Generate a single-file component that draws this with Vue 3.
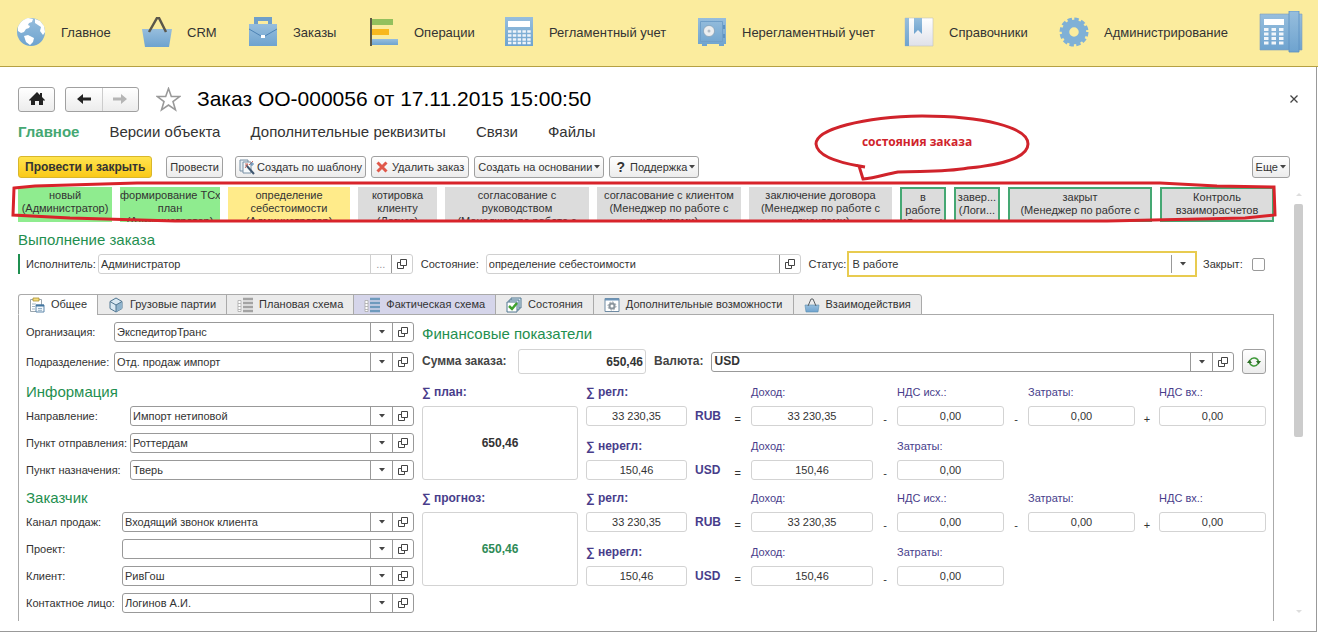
<template>
  <div class="app">
    <!-- Icon sprite -->
    <svg class="sprite" width="0" height="0" aria-hidden="true">
      <defs>
        <linearGradient id="blue" x1="0" y1="0" x2="0" y2="1">
          <stop offset="0" stop-color="#97bedd" />
          <stop offset="1" stop-color="#6ea3cf" />
        </linearGradient>
        <linearGradient id="paper" x1="0" y1="0" x2="0" y2="1">
          <stop offset="0" stop-color="#ffffff" />
          <stop offset="1" stop-color="#dfe1ea" />
        </linearGradient>
      </defs>
      <symbol id="globe" viewBox="0 0 30 30">
        <circle cx="15" cy="15" r="14" fill="url(#blue)" />
        <path d="M2 10C4 5 8 2 12 1l5 1-1 3-3 1-1 2 2 1-1 2-3 1-2 3-3 1-3-2zM19 2l5 2 4 5 1 6-2 3-3-4 1-4-3-2-3-2zM8 19l4-1 6 3-1 4-3 3-4-3z" fill="#fff" />
      </symbol>
      <symbol id="basket" viewBox="0 0 30 30">
        <path d="M0 12h30l-3 18H3z" fill="url(#blue)" />
        <path d="M7 15l8-14h2l7 14" fill="none" stroke="#5b574b" stroke-width="2.5" />
      </symbol>
      <symbol id="case" viewBox="0 0 30 30">
        <path d="M8 8V2h14v6" fill="none" stroke="#6f9fc9" stroke-width="4" />
        <path d="M1 7h28v22H1z" fill="url(#blue)" />
        <path d="M1 12l12 7h4l12-7" fill="none" stroke="#4d83b4" stroke-width="1" />
        <path d="M13 18h4v3h-4z" fill="#fff" />
      </symbol>
      <symbol id="bars" viewBox="0 0 30 30">
        <path d="M2 1v28" stroke="#5f5a45" stroke-width="2" />
        <path d="M3 2h21v6H3z" fill="#93c05d" />
        <path d="M3 12h17v6H3z" fill="#f8b81e" />
        <path d="M3 22h26v6H3z" fill="url(#blue)" />
      </symbol>
      <symbol id="calc" viewBox="0 0 30 30">
        <path d="M1 0h28v29H1z" fill="url(#blue)" />
        <path d="M4 4h22v6H4z" fill="#fff" />
        <path d="M4 14.500h23M4 18.500h23M4 22.500h23M4 26h23" stroke="#eef4fa" stroke-width="2.500" stroke-dasharray="3.500 1.300" />
      </symbol>
      <symbol id="safe" viewBox="0 0 30 30">
        <path d="M1 1h28v26h-2v2h-5v-2H10v2H5v-2H1z" fill="url(#blue)" />
        <path d="M3.500 4.500h22v20h-22z" fill="none" stroke="#6f9fc9" />
        <path d="M27 8v4M27 17v4" stroke="#5f93c1" stroke-width="2" />
        <circle cx="12" cy="14" r="5.500" fill="#eceef0" stroke="#7b93a8" stroke-width=".6" />
        <circle cx="12" cy="14" r="1.500" fill="#b3bcc5" />
      </symbol>
      <symbol id="book" viewBox="0 0 30 30">
        <path d="M1 1h28v28H1z" fill="url(#paper)" stroke="#c5c4b8" stroke-width=".6" />
        <path d="M1 1h4v28H1z" fill="url(#blue)" />
        <path d="M10 1h8v16l-4-4-4 4z" fill="url(#blue)" />
      </symbol>
      <symbol id="gear" viewBox="0 0 30 30">
        <circle cx="15" cy="15" r="8.500" fill="none" stroke="#7fb0d6" stroke-width="7.500" />
        <circle cx="15" cy="15" r="13" fill="none" stroke="#7fb0d6" stroke-width="3" stroke-dasharray="4.400 2.400" />
      </symbol>
      <symbol id="phone" viewBox="0 0 44 42">
        <path d="M1 3h42v36H1z" fill="url(#blue)" stroke="#7f9fb9" stroke-width=".6" />
        <path d="M5 8h20v6H5z" fill="#fff" />
        <path d="M5 18.500h20M5 23h20M5 27.500h20M5 32h20" stroke="#f2f6fa" stroke-width="3" stroke-dasharray="4.500 3" />
        <path d="M30 0h10v41H30z" fill="url(#blue)" stroke="#5b8fc0" stroke-width=".8" />
      </symbol>
      <symbol id="home" viewBox="0 0 16 14">
        <path d="M8 0l3 3V1h2v4l3 3-1 1-1-1v5h-4V9H6v4H2V8L1 9 0 8z" fill="#222" />
      </symbol>
      <symbol id="arrow" viewBox="0 0 16 12">
        <path d="M1 6l6-5v3.500h8v3H7V11z" fill="currentColor" />
      </symbol>
      <symbol id="star" viewBox="0 0 24 24">
        <path d="M12 1.500l2.700 7.700h8l-6.400 4.800 2.400 8L12 17.300 5.300 22l2.400-8L1.300 9.200h8z" fill="#fff" stroke="#999" stroke-width="1.500" />
      </symbol>
      <symbol id="wand" viewBox="0 0 16 16">
        <path d="M1 1h8v11H1z" fill="#e6edf3" stroke="#7890a5" />
        <path d="M4 3h8v11H4z" fill="#f6f9fb" stroke="#7890a5" />
        <path d="M7 6l8 9" stroke="#3e566f" stroke-width="2" />
        <path d="M6 9l3-4M10 6l4-4M6 5h3" stroke="#d06a5e" />
        <path d="M13 3v4M11 5h4" stroke="#5787b0" />
      </symbol>
      <symbol id="cross" viewBox="0 0 12 12">
        <path d="M1.500 1.500l9 9M10.500 1.500l-9 9" stroke="#e0584a" stroke-width="3" />
      </symbol>
      <symbol id="open" viewBox="0 0 10 10">
        <path d="M3.500.500h6v6h-6zM3 3.500H.500v6h6V7" fill="none" stroke="#444" />
      </symbol>
      <symbol id="caret" viewBox="0 0 6 4">
        <path d="M0 0h6L3 3.500z" fill="#444" />
      </symbol>
      <symbol id="refresh" viewBox="0 0 14 12">
        <path d="M3 4.500A4.500 4.500 0 0 1 11.500 6M11 7.500A4.500 4.500 0 0 1 2.500 6" fill="none" stroke="#3f9a3a" stroke-width="1.500" />
        <path d="M9 5h5l-2.500 3.500zM0 7h5L2.500 3.500z" fill="#2f6f28" />
      </symbol>
      <symbol id="clipboard" viewBox="0 0 16 16">
        <path d="M1.500 2.500h11v12h-11z" fill="#fff" stroke="#9aa5ad" />
        <path d="M4 1h6v3H4z" fill="#f4dc7c" stroke="#a98f34" stroke-width=".8" />
        <path d="M3 7h4M3 9.500h3M3 12h3" stroke="#9fb4c4" />
        <path d="M7 8h8v7H7z" fill="#f3f8fc" stroke="#5e88ab" />
        <path d="M7 8.500h8" stroke="#42759f" stroke-width="2" />
        <path d="M9 11.500h4M9 13.300h4" stroke="#7a9cb8" stroke-width=".8" />
      </symbol>
      <symbol id="cube" viewBox="0 0 16 16">
        <path d="M8 1l6 3.500v7L8 15l-6-3.500v-7z" fill="#d9e8f2" stroke="#4f7590" />
        <path d="M8 8l6-3.500v7L8 15z" fill="#8fb3cc" />
        <path d="M2 4.500L8 8l6-3.500M8 8v7" fill="none" stroke="#4f7590" />
      </symbol>
      <symbol id="scheme" viewBox="0 0 16 16">
        <path d="M1 3.500h3v11H1zM1 6.500h3M1 9.500h3M1 12.500h3" fill="#fff" stroke="#aaa" stroke-width=".8" />
        <path d="M6 2h10M6 6h10M6 10h10M6 14h10" stroke="currentColor" stroke-width="2.500" />
      </symbol>
      <symbol id="check" viewBox="0 0 16 16">
        <path d="M5 1h10v10H5z" fill="#dbe9f2" stroke="#50768f" />
        <path d="M3 3h10v10H3z" fill="#dbe9f2" stroke="#50768f" />
        <path d="M1 5h10v10H1z" fill="#fff" stroke="#50768f" />
        <path d="M3 9l3 3 5-6" fill="none" stroke="#3fa22f" stroke-width="2.500" />
      </symbol>
      <symbol id="cog" viewBox="0 0 16 16">
        <path d="M1 1.500h14v13H1z" fill="#fff" stroke="#6f8ba3" />
        <path d="M1 2.500h14" stroke="#6c94b8" stroke-width="2" />
        <circle cx="8" cy="9" r="2.500" fill="none" stroke="#8b959d" stroke-width="2" />
        <circle cx="8" cy="9" r="4" fill="none" stroke="#8b959d" stroke-dasharray="1.500 1.600" />
      </symbol>
      <symbol id="bag" viewBox="0 0 16 16">
        <path d="M1 8h14l-1 7H2z" fill="url(#blue)" stroke="#5d8fae" stroke-width=".6" />
        <path d="M4 9l3-7h2l3 7" fill="none" stroke="#5a5f63" />
      </symbol>
    </svg>

    <nav class="sections">
      <a v-for="section in sections" :key="section.name" href="#" class="section">
        <svg class="section-icon"><use :href="'#' + section.icon" /></svg>
        {{ section.name }}
      </a>
      <a href="#" class="section" aria-label="Телефония">
        <svg class="phone-icon"><use href="#phone" /></svg>
      </a>
    </nav>

    <main class="window">
      <header class="title-bar">
        <button class="btn home" aria-label="Домой">
          <svg width="16" height="14"><use href="#home" /></svg>
        </button>
        <div class="history">
          <button aria-label="Назад"><svg width="16" height="12"><use href="#arrow" /></svg></button>
          <button class="forward" aria-label="Вперед"><svg width="16" height="12"><use href="#arrow" /></svg></button>
        </div>
        <svg class="star"><use href="#star" /></svg>
        <h1>Заказ ОО-000056 от 17.11.2015 15:00:50</h1>
        <button class="close" aria-label="Закрыть">
          <svg width="8" height="8" viewBox="0 0 8 8"><path d="M.5.5l7 7M7.500.500l-7 7" stroke="#444" stroke-width="1.300" /></svg>
        </button>
      </header>

      <nav class="links">
        <a v-for="(link, i) in links" :key="link" href="#" :class="{ current: i === 0 }">{{ link }}</a>
      </nav>

      <div class="toolbar">
        <button class="btn primary">Провести и закрыть</button>
        <button class="btn">Провести</button>
        <button class="btn template"><svg width="16" height="16"><use href="#wand" /></svg>Создать по шаблону</button>
        <button class="btn delete"><svg width="12" height="12"><use href="#cross" /></svg>Удалить заказ</button>
        <button class="btn">Создать на основании<svg width="6" height="4"><use href="#caret" /></svg></button>
        <button class="btn support"><b>?</b>Поддержка<svg width="6" height="4"><use href="#caret" /></svg></button>
        <button class="btn more">Еще<svg width="6" height="4"><use href="#caret" /></svg></button>
      </div>

      <div class="body">
        <div class="content">
          <div class="states">
            <div v-for="state in states" :key="state.text" class="state" :class="state.kind">{{ state.text }}</div>
            <svg class="frame" viewBox="0 0 1256 35" preserveAspectRatio="none">
              <path d="M-4 1L17-1l102-3h1023l57 3 57 1 1 28-30 3-138 3H157L52 31l-57-3z" />
            </svg>
            <div class="callout">
              <svg viewBox="0 0 218 70">
                <path d="M52 54L46 53C24 49 4 43 3 31 3 16 50 4 109 3c60 0 106 11 106 28 0 14-28 21-60 24-22 4-38 3-70 4-12 2-22 6-35 7l-4-13z" />
              </svg>
              <span>состояния заказа</span>
            </div>
          </div>

          <h2 class="group-title">Выполнение заказа</h2>
          <div class="status-row">
            <i class="marker"></i>
            <label for="executor">Исполнитель:</label>
            <div class="field soft executor">
              <input id="executor" v-model="executor" type="text" />
              <button class="dots" aria-label="Выбрать">...</button>
              <button aria-label="Открыть"><svg width="10" height="10"><use href="#open" /></svg></button>
            </div>
            <label for="state">Состояние:</label>
            <div class="field soft current-state">
              <input id="state" v-model="currentState" type="text" />
              <button aria-label="Открыть"><svg width="10" height="10"><use href="#open" /></svg></button>
            </div>
            <label for="status">Статус:</label>
            <div class="field status">
              <select id="status"><option>В работе</option></select>
              <span class="drop"><svg width="6" height="4"><use href="#caret" /></svg></span>
            </div>
            <label for="closed">Закрыт:</label>
            <input id="closed" v-model="closed" type="checkbox" />
          </div>

          <div class="tabs" role="tablist">
            <button v-for="(tab, i) in tabs" :key="tab.name" role="tab" class="tab"
              :class="[tab.kind, { active: activeTab === i }]" @click="activeTab = i">
              <svg width="16" height="16"><use :href="'#' + tab.icon" /></svg>{{ tab.name }}
            </button>
          </div>

          <div class="panel">
            <div class="left">
              <section v-for="group in groups" :key="group.id" :class="['group', group.id]">
                <h2 v-if="group.title">{{ group.title }}</h2>
                <div v-for="item in group.fields" :key="item.id" class="row">
                  <label :for="item.id">{{ item.label }}</label>
                  <div class="field">
                    <select :id="item.id"><option>{{ item.value }}</option></select>
                    <span class="drop"><svg width="6" height="4"><use href="#caret" /></svg></span>
                    <button aria-label="Открыть"><svg width="10" height="10"><use href="#open" /></svg></button>
                  </div>
                </div>
              </section>
            </div>

            <div class="right">
              <h2>Финансовые показатели</h2>
              <div class="sum-row">
                <label for="sum">Сумма заказа:</label>
                <input id="sum" class="box sum" type="text" value="650,46" />
                <label for="currency">Валюта:</label>
                <div class="field currency">
                  <select id="currency"><option>USD</option></select>
                  <span class="drop"><svg width="6" height="4"><use href="#caret" /></svg></span>
                  <button aria-label="Открыть"><svg width="10" height="10"><use href="#open" /></svg></button>
                </div>
                <button class="btn refresh" aria-label="Обновить"><svg width="14" height="12"><use href="#refresh" /></svg></button>
              </div>

              <div v-for="total in totals" :key="total.id" class="totals">
                <label :for="total.id" class="caption strong">{{ total.label }}</label>
                <input :id="total.id" class="box total" :class="total.id" type="text" value="650,46" />
                <template v-for="(line, n) in total.lines" :key="n">
                  <template v-for="(cell, c) in line.cells" :key="c">
                    <label :for="total.id + n + c" class="caption" :class="['c' + c, 'l' + n, { strong: c === 0 }]">{{ cell.label }}</label>
                    <input :id="total.id + n + c" class="box" :class="['c' + c, 'b' + n]" type="text" :value="cell.value" />
                    <span v-if="cell.sign" class="sign" :class="['s' + c, 'b' + n]">
                      <b v-if="c === 0">{{ line.currency }}</b>{{ cell.sign }}
                    </span>
                  </template>
                </template>
              </div>
            </div>
          </div>
        </div>

        <div class="scrollbar">
          <i class="up"></i>
          <i class="thumb"></i>
          <i class="down"></i>
        </div>
      </div>
    </main>
  </div>
</template>

<script setup>
import { ref } from 'vue';

const executor = ref('Администратор');
const currentState = ref('определение себестоимости');
const closed = ref(false);
const activeTab = ref(0);

const sections = [
  { name: 'Главное', icon: 'globe' },
  { name: 'CRM', icon: 'basket' },
  { name: 'Заказы', icon: 'case' },
  { name: 'Операции', icon: 'bars' },
  { name: 'Регламентный учет', icon: 'calc' },
  { name: 'Нерегламентный учет', icon: 'safe' },
  { name: 'Справочники', icon: 'book' },
  { name: 'Администрирование', icon: 'gear' },
];

const links = ['Главное', 'Версии объекта', 'Дополнительные реквизиты', 'Связи', 'Файлы'];

const states = [
  { text: 'новый\n(Администратор)', kind: 'done' },
  { text: 'формирование ТСх\nплан\n(Администратор)', kind: 'done' },
  { text: 'определение\nсебестоимости\n(Администратор)', kind: 'now' },
  { text: 'котировка\nклиенту\n(Логист)', kind: '' },
  { text: 'согласование с\nруководством\n(Менеджер по работе с', kind: '' },
  { text: 'согласование с клиентом\n(Менеджер по работе с\nклиентами)', kind: '' },
  { text: 'заключение договора\n(Менеджер по работе с\nклиентами)', kind: '' },
  { text: 'в\nработе\n(Логист)', kind: 'outlined' },
  { text: 'завер...\n(Логи...', kind: 'outlined' },
  { text: 'закрыт\n(Менеджер по работе с', kind: 'outlined' },
  { text: 'Контроль\nвзаиморасчетов', kind: 'outlined' },
];

const tabs = [
  { name: 'Общее', icon: 'clipboard' },
  { name: 'Грузовые партии', icon: 'cube' },
  { name: 'Плановая схема', icon: 'scheme', kind: 'plan' },
  { name: 'Фактическая схема', icon: 'scheme', kind: 'fact' },
  { name: 'Состояния', icon: 'check' },
  { name: 'Дополнительные возможности', icon: 'cog' },
  { name: 'Взаимодействия', icon: 'bag' },
];

const groups = [
  {
    id: 'company',
    fields: [
      { id: 'org', label: 'Организация:', value: 'ЭкспедиторТранс' },
      { id: 'dept', label: 'Подразделение:', value: 'Отд. продаж импорт' },
    ],
  },
  {
    id: 'info',
    title: 'Информация',
    fields: [
      { id: 'direction', label: 'Направление:', value: 'Импорт нетиповой' },
      { id: 'from', label: 'Пункт отправления:', value: 'Роттердам' },
      { id: 'to', label: 'Пункт назначения:', value: 'Тверь' },
    ],
  },
  {
    id: 'customer',
    title: 'Заказчик',
    fields: [
      { id: 'channel', label: 'Канал продаж:', value: 'Входящий звонок клиента' },
      { id: 'project', label: 'Проект:', value: '' },
      { id: 'client', label: 'Клиент:', value: 'РивГош' },
      { id: 'contact', label: 'Контактное лицо:', value: 'Логинов А.И.' },
    ],
  },
];

const lines = [
  {
    currency: 'RUB',
    cells: [
      { label: '∑ регл:', value: '33 230,35', sign: '=' },
      { label: 'Доход:', value: '33 230,35', sign: '-' },
      { label: 'НДС исх.:', value: '0,00', sign: '-' },
      { label: 'Затраты:', value: '0,00', sign: '+' },
      { label: 'НДС вх.:', value: '0,00' },
    ],
  },
  {
    currency: 'USD',
    cells: [
      { label: '∑ нерегл:', value: '150,46', sign: '=' },
      { label: 'Доход:', value: '150,46', sign: '-' },
      { label: 'Затраты:', value: '0,00' },
    ],
  },
];

const totals = [
  { id: 'plan', label: '∑ план:', lines },
  { id: 'forecast', label: '∑ прогноз:', lines },
];
</script>

<style>
body {
  background: #fff;
}
</style>

<style scoped>
.app {
  font: 11px/13px "Liberation Sans", Arial, sans-serif;
  color: #333;
}

.app * {
  box-sizing: border-box;
}

.sprite {
  position: absolute;
}

svg {
  display: block;
  flex: none;
}

button,
input,
select {
  margin: 0;
  font: inherit;
  color: inherit;
}

a {
  color: inherit;
  text-decoration: none;
}

h1,
h2 {
  margin: 0;
  font-weight: normal;
}

h2 {
  font-size: 15px;
  line-height: 20px;
  color: #1f8f50;
}

/* Sections */
.sections {
  display: grid;
  grid-template-columns: 126fr 106fr 121fr 135fr 193fr 207fr 155fr 200fr 59fr;
  height: 67px;
  padding: 0 0 2px 16px;
  background: #fbec9e;
  border-bottom: 1px solid #b5a043;
}

.section {
  display: flex;
  align-items: center;
  gap: 15px;
  font-size: 13px;
  white-space: nowrap;
}

.section-icon {
  width: 30px;
  height: 30px;
}

.phone-icon {
  width: 44px;
  height: 42px;
}

/* Window */
.window {
  margin-right: 1px;
  padding: 19px 13px 10px 18px;
  border-right: 1px solid #999;
  border-bottom: 1px solid #999;
}

.title-bar {
  display: flex;
  align-items: center;
  height: 26px;
}

.btn {
  display: flex;
  align-items: center;
  justify-content: center;
  gap: 2px;
  height: 22px;
  padding: 0 3px;
  border: 1px solid #a0a0a0;
  border-radius: 3px;
  background: linear-gradient(#fff, #ececec);
  white-space: nowrap;
}

.home {
  width: 37px;
  height: 25px;
  margin-right: 10px;
}

.history {
  display: flex;
  width: 74px;
  height: 25px;
  border: 1px solid #a0a0a0;
  border-radius: 3px;
  background: linear-gradient(#fff, #ececec);
}

.history button {
  display: flex;
  flex: 1;
  align-items: center;
  justify-content: center;
  padding: 0;
  border: 0;
  background: none;
  color: #222;
}

.history .forward {
  border-left: 1px solid #ccc;
  color: #b5b5b5;
}

.history .forward svg {
  transform: scaleX(-1);
}

.star {
  width: 25px;
  height: 25px;
  margin: 0 16px 0 17px;
}

h1 {
  font-size: 21px;
  line-height: 26px;
  color: #000;
}

.close {
  margin: 0 1px 0 auto;
  padding: 4px;
  border: 0;
  background: none;
}

.links {
  display: flex;
  gap: 30px;
  margin-top: 10px;
  font-size: 15px;
  line-height: 20px;
}

.links .current {
  font-weight: bold;
  color: #45a873;
}

.toolbar {
  display: flex;
  gap: 5px;
  margin-top: 14px;
  padding-right: 13px;
}

.toolbar .primary {
  margin-right: 9px;
  padding: 0 6px;
  border-color: #d9b72b;
  background: linear-gradient(#ffe44f, #fac918);
  font-size: 12px;
  font-weight: bold;
}

.template {
  margin-left: 7px;
}

.delete {
  gap: 4px;
  padding: 0 4px;
}

.support b {
  padding: 0 3px;
  font-size: 14px;
}

.more {
  margin-left: auto;
}

.body {
  display: flex;
  gap: 20px;
  margin-top: 9px;
}

.content {
  flex: 1;
  min-width: 0;
}

/* States */
.states {
  position: relative;
  display: grid;
  grid-template-columns: 94fr 100fr 122fr 79fr 144fr 144fr 143fr 46fr 46fr 144fr 114fr;
  gap: 8px;
}

.state {
  height: 35px;
  min-width: 0;
  padding-top: 2px;
  overflow: hidden;
  background: #dcdcdc;
  text-align: center;
  white-space: pre;
}

.state.done {
  background: #8fec8f;
}

.state.now {
  background: #ffeb8a;
}

.state.outlined {
  border: 2px solid #45a873;
}

.frame {
  position: absolute;
  inset: 0;
  width: 100%;
  height: 35px;
  overflow: visible;
}

.frame path {
  fill: none;
  stroke: #d8232a;
  stroke-width: 3;
  vector-effect: non-scaling-stroke;
}

.callout {
  position: absolute;
  bottom: 39px;
  left: 63.3%;
  width: 218px;
}

.callout path {
  fill: #fff;
  stroke: #d0232b;
  stroke-width: 3;
}

.callout span {
  position: absolute;
  top: 21px;
  left: 0;
  width: 208px;
  font: bold 12px/16px "Open Sans", "Noto Sans", sans-serif;
  color: #d0232b;
  text-align: center;
}

.group-title {
  margin-top: 8px;
}

/* Fields */
.field {
  display: flex;
  flex: 1;
  height: 20px;
  min-width: 0;
  border: 1px solid #999;
  border-radius: 3px;
  background: #fff;
}

.field input,
.field select {
  flex: 1;
  min-width: 0;
  padding: 0 2px;
  border: 0;
  outline: 0;
  background: none;
  appearance: none;
}

.field select {
  margin-right: -22px;
}

.field button,
.drop {
  display: flex;
  flex: 0 0 21px;
  align-items: center;
  justify-content: center;
  padding: 0;
  border: 0;
  border-left: 1px solid #999;
  background: none;
}

.drop {
  flex-basis: 22px;
  pointer-events: none;
}

.soft {
  border-color: #d0d0d0;
}

.field .dots {
  border-left-color: #d0d0d0;
  color: #999;
}

.status-row {
  display: flex;
  align-items: center;
  height: 26px;
  margin-top: 1px;
}

.marker {
  width: 2px;
  height: 20px;
  margin-right: 6px;
  background: #1f8f50;
}

.status-row label {
  flex: none;
  width: 65px;
}

.status-row label[for="executor"] {
  width: 72px;
}

.executor,
.current-state {
  margin-right: 8px;
}

.status-row label[for="status"] {
  width: 38px;
}

.status {
  flex: 347 1 0;
  height: 26px;
  margin-right: 6px;
  padding: 2px;
  border: 2px solid #e8cb50;
  border-radius: 0;
}

.executor,
.current-state {
  flex: 317 1 0;
}

.status-row label[for="closed"] {
  width: 49px;
}

input[type="checkbox"] {
  width: 13px;
  height: 13px;
  margin-right: 9px;
  border: 1px solid #999;
  border-radius: 2px;
  background: #fff;
  appearance: none;
}

input[type="checkbox"]:checked {
  background: #45a873;
}

/* Tabs */
.tabs {
  position: relative;
  display: flex;
  height: 21px;
  margin: 17px 0 -1px;
}

.tab {
  display: flex;
  align-items: center;
  gap: 6px;
  margin-right: -1px;
  padding: 0 10px;
  border: 1px solid #aaa;
  background: #ebebeb;
  white-space: nowrap;
}

.tab:first-child {
  border-radius: 3px 0 0;
}

.tab:last-child {
  border-radius: 0 3px 0 0;
}

.tab.active {
  border-bottom-color: #fff;
  background: #fff;
}

.plan svg {
  color: #a3a3a3;
}

.fact {
  background: #d5d5ea;
}

.fact svg {
  color: #6e9abd;
}

.panel {
  display: flex;
  gap: 8px;
  padding: 7px 7px 8px;
  border: 1px solid #aaa;
  border-bottom: 0;
}

.left {
  flex: 388 1 0;
  min-width: 0;
}

.group {
  display: grid;
  gap: 7px;
}

.company {
  gap: 10px;
}

.group h2 {
  margin: 10px 0 -3px;
}

.customer h2 {
  margin-top: 8px;
}

.row {
  display: flex;
  align-items: center;
}

.row label {
  width: 88px;
  white-space: nowrap;
}

.info .row label {
  width: 104px;
}

.customer .row label {
  width: 96px;
}

/* Finance */
.right {
  flex: 844 1 0;
  min-width: 0;
  padding-top: 2px;
}

.sum-row {
  display: flex;
  align-items: center;
  gap: 8px;
  margin-top: 5px;
  font-size: 12px;
  font-weight: bold;
}

.sum-row label {
  color: #444;
}

.sum-row label[for="sum"] {
  width: 88px;
}

.box {
  min-width: 0;
  width: 100%;
  height: 20px;
  padding: 0 4px;
  border: 1px solid #d3d3d3;
  border-radius: 3px;
  background: #fff;
  text-align: center;
}

.box.sum {
  width: 128px;
  height: 25px;
  padding-right: 2px;
  font-size: 12px;
  text-align: right;
}

.refresh {
  width: 24px;
  height: 25px;
}

.totals {
  display: grid;
  grid-template-columns: 156fr 8px 101fr 64px 122fr 24px 107fr 24px 107fr 24px 107fr;
  grid-template-rows: 32px 20px 34px 20px;
}

.caption {
  grid-column: 1;
  grid-row: 1;
  align-self: end;
  padding-bottom: 4px;
  line-height: 20px;
  color: #483d8b;
  white-space: nowrap;
}

.caption.strong {
  font-size: 12px;
  font-weight: bold;
}

.total {
  grid-column: 1;
  grid-row: 2 / 5;
  height: 100%;
  font-size: 12px;
  font-weight: bold;
}

.forecast {
  color: #2e8b57;
}

.c0 { grid-column: 3; }
.c1 { grid-column: 5; }
.c2 { grid-column: 7; }
.c3 { grid-column: 9; }
.c4 { grid-column: 11; }

.s0 { grid-column: 4; }
.s1 { grid-column: 6; }
.s2 { grid-column: 8; }
.s3 { grid-column: 10; }

.l0 { grid-row: 1; }
.l1 { grid-row: 3; }
.b0 { grid-row: 2; }
.b1 { grid-row: 4; }

.sign {
  display: flex;
  align-items: flex-end;
  justify-content: center;
}

.s0 {
  justify-content: space-between;
  padding: 0 10px 0 8px;
}

.sign b {
  align-self: center;
  font-size: 12px;
  color: #483d8b;
}

/* Scrollbar */
.scrollbar {
  display: flex;
  flex-direction: column;
  align-items: center;
  width: 9px;
  padding: 6px 0 8px;
}

.thumb {
  flex: none;
  width: 9px;
  height: 233px;
  margin: 8px 0 auto;
  border-radius: 2px;
  background: #ccc;
}

.up,
.down {
  border: 3px solid transparent;
}

.up {
  border-top: 0;
  border-bottom-color: #ddd;
}

.down {
  border-bottom: 0;
  border-top-color: #ddd;
}
</style>
